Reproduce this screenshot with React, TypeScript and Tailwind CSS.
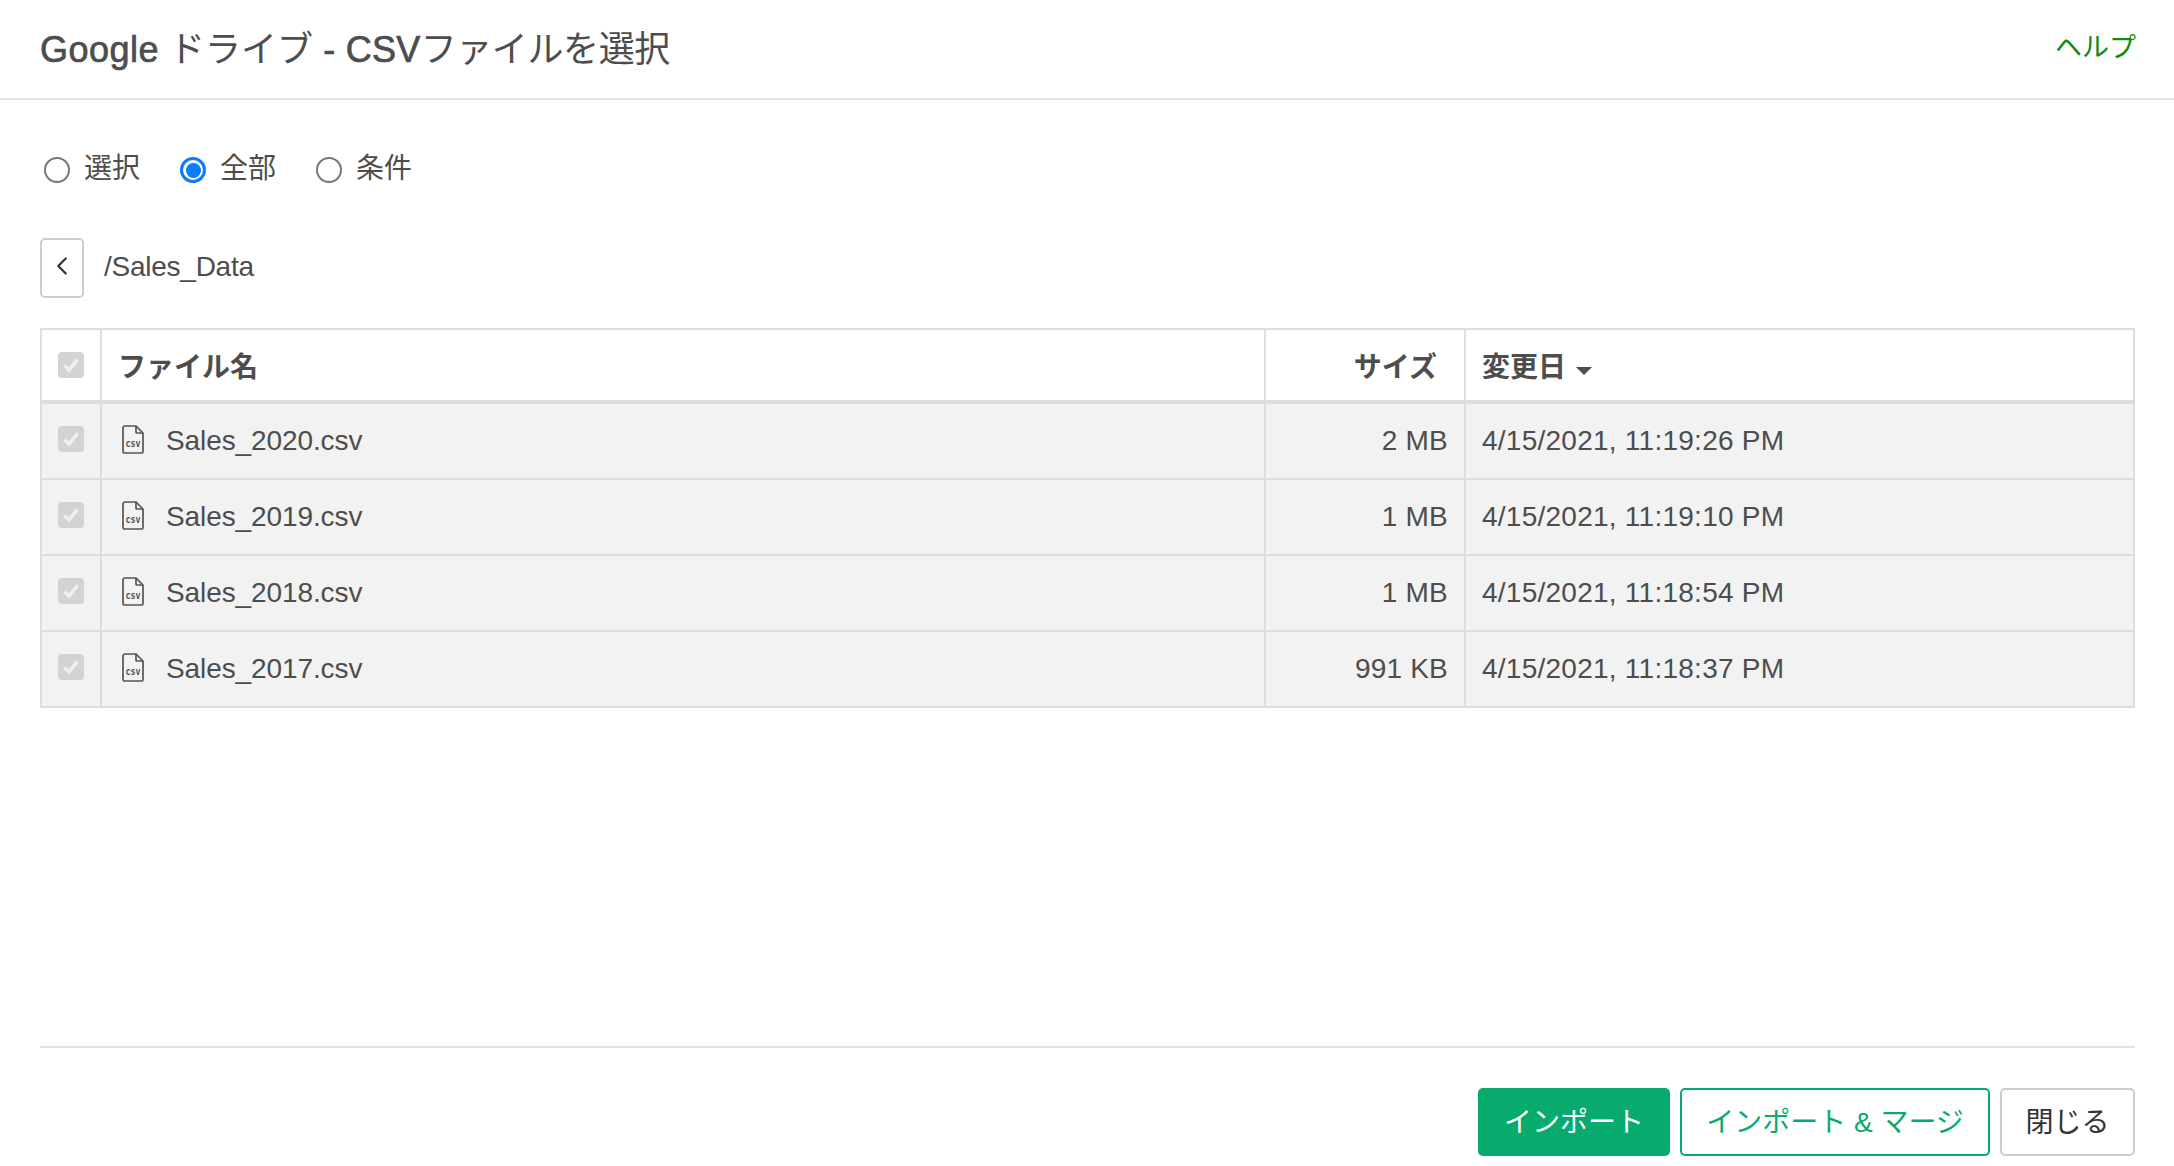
import { ChevronLeft } from "lucide-react";

const files = [
  { name: "Sales_2020.csv", size: "2 MB", date: "4/15/2021, 11:19:26 PM" },
  { name: "Sales_2019.csv", size: "1 MB", date: "4/15/2021, 11:19:10 PM" },
  { name: "Sales_2018.csv", size: "1 MB", date: "4/15/2021, 11:18:54 PM" },
  { name: "Sales_2017.csv", size: "991 KB", date: "4/15/2021, 11:18:37 PM" },
];

const Radio = ({ label, checked }: { label: string; checked?: boolean }) => (
  <div className="flex items-center gap-[14px]">
    {checked ? (
      <span className="w-[26px] h-[26px] rounded-full border-[3px] border-[#0a7aff] flex items-center justify-center">
        <span className="w-[15px] h-[15px] rounded-full bg-[#0a7aff]"></span>
      </span>
    ) : (
      <span className="w-[26px] h-[26px] rounded-full border-2 border-[#767676]"></span>
    )}
    <span className="pb-[2px]">{label}</span>
  </div>
);

const Check = () => (
  <span className="w-[26px] h-[26px] rounded-[4px] bg-[#d3d3d3] flex items-center justify-center">
    <svg width="18" height="16" viewBox="0 0 18 16" fill="none">
      <path d="M2.5 8.500 L7 13 L15.500 2.500" stroke="#efefef" strokeWidth="3.6" />
    </svg>
  </span>
);

const CsvIcon = () => (
  <svg width="22" height="29" viewBox="0 0 22 29" fill="none" className="shrink-0 mb-[4px]">
    <path
      d="M3 1h11l7 7v18.500a1.500 1.500 0 0 1-1.500 1.500h-17A1.500 1.500 0 0 1 1 26.500V3a2 2 0 0 1 2-2z"
      stroke="#555555"
      strokeWidth="1.7"
    />
    <path d="M14 1v6a1 1 0 0 0 1 1h6" stroke="#555555" strokeWidth="1.7" />
    <text
      x="11"
      y="22"
      textAnchor="middle"
      fontSize="11"
      fontWeight="700"
      fontFamily="'DejaVu Sans Mono', monospace"
      fill="#555555"
      textLength="15"
      lengthAdjust="spacingAndGlyphs"
    >
      csv
    </text>
  </svg>
);

export default function App() {
  return (
    <div
      className="w-[2174px] h-[1166px] flex flex-col bg-white text-[#4d4d4d] text-[28px] overflow-hidden"
      style={{ fontFamily: '"Liberation Sans", "Noto Sans CJK JP", sans-serif' }}
    >
      {/* Header */}
      <div className="h-[100px] shrink-0 flex items-center justify-between pl-[40px] pr-[38px] border-b-2 border-[#e2e2e2]">
        <div className="text-[36px] leading-none pt-[2px]">
          <span className="tracking-[0.5px] [-webkit-text-stroke:0.7px_#4d4d4d]">Google</span> ドライブ{" "}
          <span className="tracking-[0.3px] [-webkit-text-stroke:0.7px_#4d4d4d]">- CSV</span>
          <span className="tracking-[-0.4px]">ファイルを選択</span>
        </div>
        <a className="text-[27px] text-[#108a10] pb-[2px]">ヘルプ</a>
      </div>

      <div className="flex-1 flex flex-col pl-[40px] pr-[39px] pt-[54px]">
        {/* Radios */}
        <div className="flex items-center gap-[40px] h-[32px] pl-[4px]">
          <Radio label="選択" />
          <Radio label="全部" checked />
          <Radio label="条件" />
        </div>

        {/* Path */}
        <div className="flex items-center gap-[20px] mt-[52px]">
          <button className="w-[44px] h-[60px] border-2 border-[#cccccc] rounded-[5px] flex items-center justify-center pb-[4px] text-[#333333]">
            <ChevronLeft size={30} strokeWidth={1.8} />
          </button>
          <span className="tracking-[-0.25px] pb-[3px]">/Sales_Data</span>
        </div>

        {/* Table */}
        <div className="mt-[30px] border-2 border-b-0 border-[#dddddd]">
          <div className="flex h-[74px] border-b-4 border-[#dddddd] font-bold">
            <div className="w-[60px] border-r-2 border-[#dddddd] flex justify-center pt-[22px]">
              <Check />
            </div>
            <div className="w-[1164px] border-r-2 border-[#dddddd] flex items-center px-[16px] pt-[5px]">ファイル名</div>
            <div className="w-[200px] border-r-2 border-[#dddddd] flex items-center justify-end pr-[27px] pt-[5px]">サイズ</div>
            <div className="flex-1 flex items-center pl-[16px] gap-[10px] pt-[5px]">
              変更日
              <span className="w-0 h-0 border-x-[8px] border-x-transparent border-t-[8px] border-t-[#4d4d4d] mt-[6px]"></span>
            </div>
          </div>
          {files.map((f) => (
            <div key={f.name} className="flex h-[76px] bg-[#f2f2f2] border-b-2 border-[#dddddd]">
              <div className="w-[60px] border-r-2 border-[#dddddd] flex justify-center pt-[22px]">
                <Check />
              </div>
              <div className="w-[1164px] border-r-2 border-[#dddddd] flex items-center gap-[22px] pl-[20px]">
                <CsvIcon />
                <span className="tracking-[-0.1px]">{f.name}</span>
              </div>
              <div className="w-[200px] border-r-2 border-[#dddddd] flex items-center justify-end pr-[16px] tracking-[0.2px]">{f.size}</div>
              <div className="flex-1 flex items-center pl-[16px] tracking-[0.25px]">{f.date}</div>
            </div>
          ))}
        </div>

        {/* Footer */}
        <div className="mt-auto border-t-2 border-[#e2e2e2] flex justify-end gap-[10px] pt-[40px] pb-[10px]">
          <button className="w-[192px] h-[68px] rounded-[5px] bg-[#07ab6e] text-white pt-[2px]">インポート</button>
          <button className="w-[310px] h-[68px] rounded-[5px] border-2 border-[#07ab6e] text-[#07ab6e] pt-[2px]">インポート &amp; マージ</button>
          <button className="w-[135px] h-[68px] rounded-[5px] border-2 border-[#cccccc] text-[#333333] pt-[2px]">閉じる</button>
        </div>
      </div>
    </div>
  );
}
